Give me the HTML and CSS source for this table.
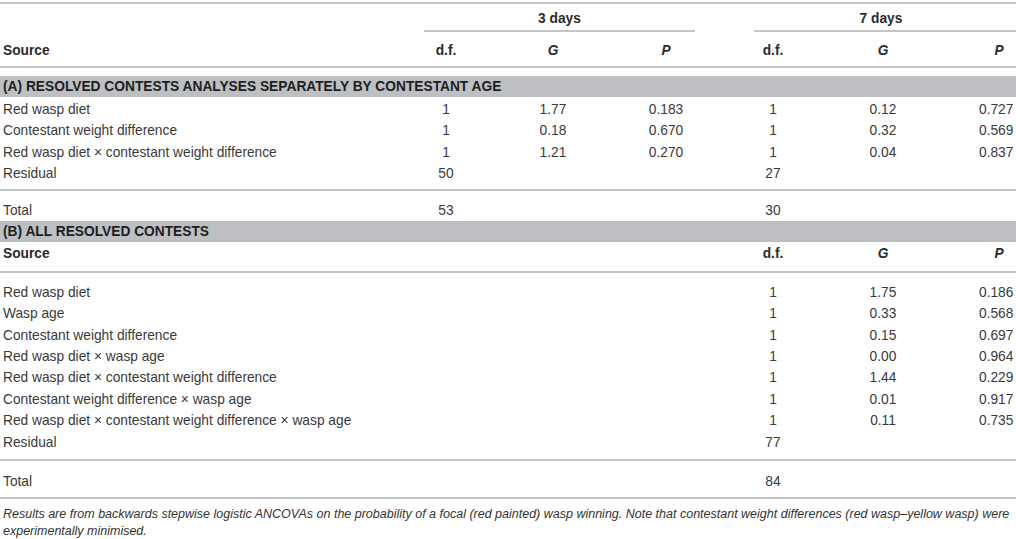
FILE: index.html
```html
<!DOCTYPE html>
<html lang="en">
<head>
<meta charset="utf-8">
<title>Table</title>
<link rel="stylesheet" href="styles.css">
</head>
<body>
<div class="table">
  <div class="row group">
    <div></div>
    <div class="span3 g3">3 days</div>
    <div class="span3 g7">7 days</div>
  </div>
  <div class="row hdr">
    <div class="src">Source</div>
    <div class="num">d.f.</div>
    <div class="num"><i>G</i></div>
    <div class="num"><i>P</i></div>
    <div class="num">d.f.</div>
    <div class="num"><i>G</i></div>
    <div class="num p2"><i>P</i></div>
  </div>

  <div class="band band-a">(A) RESOLVED CONTESTS ANALYSES SEPARATELY BY CONTESTANT AGE</div>
  <div class="body body-a">
    <div class="row">
      <div class="src">Red wasp diet</div>
      <div class="num">1</div><div class="num">1.77</div><div class="num">0.183</div>
      <div class="num">1</div><div class="num">0.12</div><div class="num p2">0.727</div>
    </div>
    <div class="row">
      <div class="src">Contestant weight difference</div>
      <div class="num">1</div><div class="num">0.18</div><div class="num">0.670</div>
      <div class="num">1</div><div class="num">0.32</div><div class="num p2">0.569</div>
    </div>
    <div class="row">
      <div class="src">Red wasp diet × contestant weight difference</div>
      <div class="num">1</div><div class="num">1.21</div><div class="num">0.270</div>
      <div class="num">1</div><div class="num">0.04</div><div class="num p2">0.837</div>
    </div>
    <div class="row">
      <div class="src">Residual</div>
      <div class="num">50</div><div></div><div></div>
      <div class="num">27</div><div></div><div></div>
    </div>
  </div>
  <div class="row total total-a">
    <div class="src">Total</div>
    <div class="num">53</div><div></div><div></div>
    <div class="num">30</div><div></div><div></div>
  </div>

  <div class="band band-b">(B) ALL RESOLVED CONTESTS</div>
  <div class="row hdr hdr-b">
    <div class="src wide">Source</div>
    <div class="num">d.f.</div>
    <div class="num"><i>G</i></div>
    <div class="num p2"><i>P</i></div>
  </div>
  <div class="body body-b">
    <div class="row">
      <div class="src wide">Red wasp diet</div>
      <div class="num">1</div><div class="num">1.75</div><div class="num p2">0.186</div>
    </div>
    <div class="row">
      <div class="src wide">Wasp age</div>
      <div class="num">1</div><div class="num">0.33</div><div class="num p2">0.568</div>
    </div>
    <div class="row">
      <div class="src wide">Contestant weight difference</div>
      <div class="num">1</div><div class="num">0.15</div><div class="num p2">0.697</div>
    </div>
    <div class="row">
      <div class="src wide">Red wasp diet × wasp age</div>
      <div class="num">1</div><div class="num">0.00</div><div class="num p2">0.964</div>
    </div>
    <div class="row">
      <div class="src wide">Red wasp diet × contestant weight difference</div>
      <div class="num">1</div><div class="num">1.44</div><div class="num p2">0.229</div>
    </div>
    <div class="row">
      <div class="src wide">Contestant weight difference × wasp age</div>
      <div class="num">1</div><div class="num">0.01</div><div class="num p2">0.917</div>
    </div>
    <div class="row">
      <div class="src wide">Red wasp diet × contestant weight difference × wasp age</div>
      <div class="num">1</div><div class="num">0.11</div><div class="num p2">0.735</div>
    </div>
    <div class="row">
      <div class="src wide">Residual</div>
      <div class="num">77</div><div></div><div></div>
    </div>
  </div>
  <div class="row total total-b">
    <div class="src wide">Total</div>
    <div class="num">84</div><div></div><div></div>
  </div>
</div>
<p class="caption">Results are from backwards stepwise logistic ANCOVAs on the probability of a focal (red painted) wasp winning. Note that contestant weight differences (red wasp–yellow wasp) were experimentally minimised.</p>
</body>
</html>
```

FILE: styles.css
```css
html, body {
  margin: 0;
  padding: 0;
  background: #ffffff;
}

body {
  font-family: "Liberation Sans", Arial, sans-serif;
  font-size: 13.75px;
  color: #3a3a3a;
  width: 1016px;
  overflow: hidden;
}

.table {
  margin-top: 2px;
  border-top: 2px solid #c4c4c4;
}

.row {
  display: grid;
  grid-template-columns: 400px 92px 122px 104px 110px 110px 78px;
  line-height: 21.4px;
}

.src {
  padding-left: 3px;
  white-space: nowrap;
}

.src.wide {
  grid-column: 1 / 5;
}

.num {
  text-align: center;
  white-space: nowrap;
}

.num.p2 {
  padding-left: 41px;
  padding-right: 7px;
}

/* group header: 3 days / 7 days */
.group {
  height: 28px;
  font-weight: bold;
  color: #2b2b2b;
}

.group .span3 {
  grid-column: span 3;
  text-align: center;
  line-height: 21px;
  padding-top: 4px;
  border-bottom: 2px solid #c4c4c4;
}

.group .g3 {
  margin-left: 24px;
  margin-right: 23px;
}

.group .g7 {
  margin-left: 36px;
  padding-right: 8px;
}

/* column headers */
.hdr {
  font-weight: bold;
  color: #2b2b2b;
  line-height: 21px;
  padding-top: 8px;
  padding-bottom: 5px;
  border-bottom: 2px solid #c4c4c4;
}

.hdr .num.p2 {
  padding-left: 51px;
}

.hdr-b {
  padding-top: 1px;
  line-height: 21.4px;
  padding-bottom: 6.6px;
}

/* section bands */
.band {
  background: #bdbfc2;
  color: #1e1e1e;
  font-weight: bold;
  height: 21px;
  line-height: 21px;
  padding-left: 3px;
  white-space: nowrap;
}

.band-a {
  margin-top: 8px;
}

.body-a {
  padding-top: 2px;
  padding-bottom: 4px;
  border-bottom: 2px solid #c4c4c4;
}

.total-a {
  padding-top: 9.5px;
  padding-bottom: 0;
  height: 30.8px;
  box-sizing: border-box;
}

.body-b {
  padding-top: 8.3px;
  padding-bottom: 6.5px;
  border-bottom: 2px solid #c4c4c4;
}

.total-b {
  padding-top: 9.8px;
  padding-bottom: 4.8px;
  border-bottom: 2px solid #c4c4c4;
}

.caption {
  margin: 7px 0 0;
  padding-left: 3px;
  font-size: 12.5px;
  line-height: 17px;
  font-style: italic;
  color: #333333;
}
```
